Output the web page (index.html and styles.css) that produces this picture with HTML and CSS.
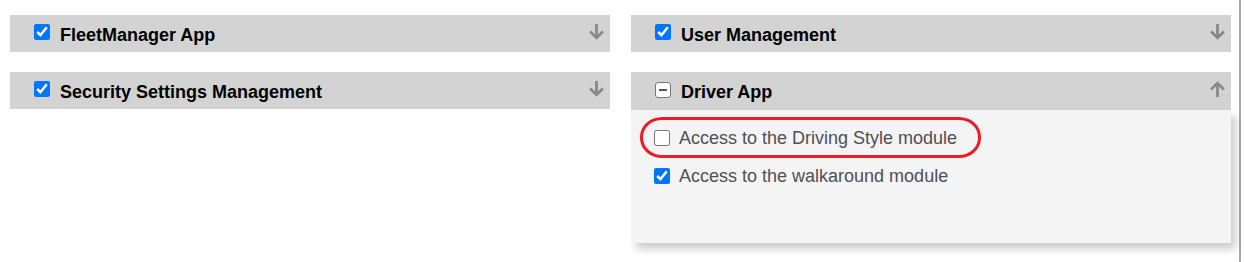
FILE: index.html
```html
<!DOCTYPE html>
<html lang="en">
<head>
  <meta charset="UTF-8" />
  <meta name="viewport" content="width=device-width, initial-scale=1.0" />
  <title>Permissions</title>
  <link rel="stylesheet" href="styles.css">
</head>
<body>
  <div class="page">
    <div class="modules">

      <div class="module">
        <div class="module-header">
          <input type="checkbox" checked />
          <span class="module-title">FleetManager App</span>
          <svg class="toggle" width="17" height="17" viewBox="0 0 16 16"><path d="M8 1v13M2 8l6 6 6-6" fill="none" stroke="#888" stroke-width="2.6"/></svg>
        </div>
      </div>

      <div class="module">
        <div class="module-header">
          <input type="checkbox" checked />
          <span class="module-title">User Management</span>
          <svg class="toggle" width="17" height="17" viewBox="0 0 16 16"><path d="M8 1v13M2 8l6 6 6-6" fill="none" stroke="#888" stroke-width="2.6"/></svg>
        </div>
      </div>

      <div class="module">
        <div class="module-header">
          <input type="checkbox" checked />
          <span class="module-title">Security Settings Management</span>
          <svg class="toggle" width="17" height="17" viewBox="0 0 16 16"><path d="M8 1v13M2 8l6 6 6-6" fill="none" stroke="#888" stroke-width="2.6"/></svg>
        </div>
      </div>

      <div class="module open">
        <div class="module-header">
          <span class="partial"></span>
          <span class="module-title">Driver App</span>
          <svg class="toggle" width="17" height="17" viewBox="0 0 16 16"><path d="M8 15V2M2 8l6-6 6 6" fill="none" stroke="#888" stroke-width="2.6"/></svg>
        </div>
        <div class="module-body">
          <label class="permission">
            <input type="checkbox" />
            Access to the Driving Style module
          </label>
          <label class="permission">
            <input type="checkbox" checked />
            Access to the walkaround module
          </label>
          <div class="highlight"></div>
        </div>
      </div>

    </div>
  </div>
</body>
</html>
```

FILE: styles.css
```css
body {
  font-family: 'Liberation Sans', Arial, sans-serif;
  background-color: #fff;
  margin: 0;
  padding: 0;
}

.page {
  width: 1241px;
  height: 262px;
  border-right: 2px solid #a9a9a9;
  box-sizing: border-box;
  padding: 15px 0 0 10px;
}

.modules {
  display: grid;
  grid-template-columns: 600px 600px;
  column-gap: 21px;
  row-gap: 20px;
  align-items: start;
}

.module-header {
  display: flex;
  align-items: center;
  height: 37px;
  padding: 0 5px 0 24px;
  background-color: #d3d3d3;
}

.module.open .module-header {
  height: 38px;
}

.module-header input,
.permission input {
  flex-shrink: 0;
  width: 16px;
  height: 16px;
  margin: 0 10px 0 0;
  accent-color: #0075ff;
}

.module-header input {
  margin-top: -3px;
}

.module-title {
  flex: 1;
  padding-top: 3px;
  font-size: 18px;
  font-weight: bold;
  color: #000;
}

.toggle {
  flex-shrink: 0;
  margin-top: -4px;
}

.partial {
  flex-shrink: 0;
  width: 16px;
  height: 16px;
  box-sizing: border-box;
  margin: -3px 10px 0 0;
  border: 1px solid #767676;
  border-radius: 3px;
  background-color: #fff;
  display: flex;
  align-items: center;
  justify-content: center;
}

.partial::after {
  content: '';
  width: 8px;
  height: 2px;
  background-color: #555;
}

.module-body {
  position: relative;
  height: 133px;
  padding: 9px 0 0 23px;
  box-sizing: border-box;
  background-color: #f4f4f4;
  box-shadow: 5px 6px 8px rgba(0, 0, 0, 0.2);
}

.permission {
  display: flex;
  align-items: center;
  height: 38px;
  font-size: 18px;
  color: #4f4f55;
}

.permission input {
  margin-right: 9px;
}

.highlight {
  position: absolute;
  left: 9px;
  top: 7px;
  width: 341px;
  height: 41px;
  box-sizing: border-box;
  border: 3px solid #ec1c24;
  border-radius: 22px / 20px;
}
```
